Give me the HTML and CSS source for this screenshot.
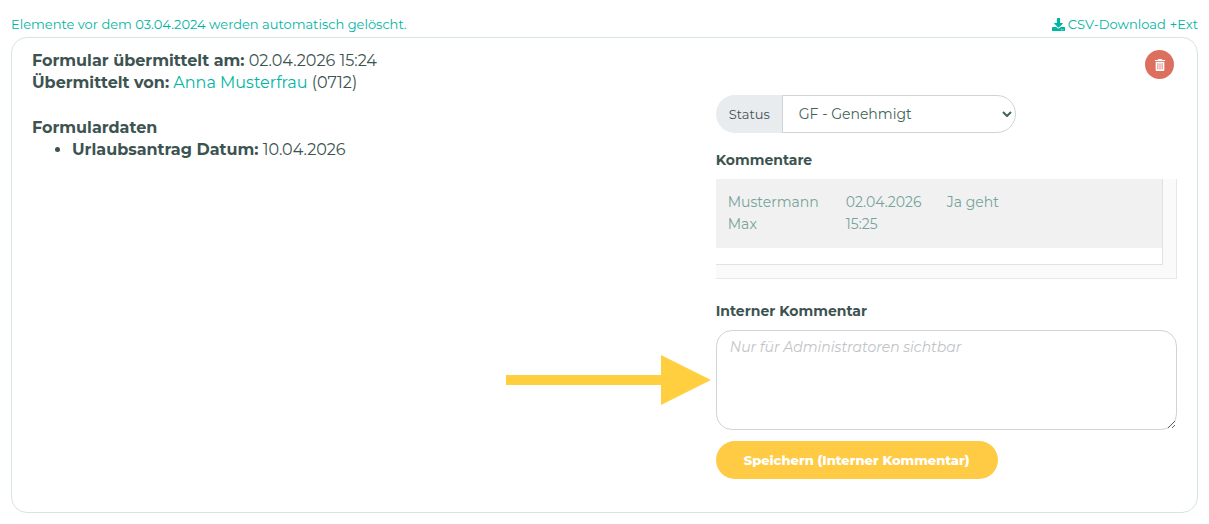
FILE: index.html
```html
<!DOCTYPE html>
<html lang="de">
<head>
<meta charset="utf-8">
<meta name="viewport" content="width=device-width, initial-scale=1">
<title>Formulardaten</title>
<link rel="stylesheet" href="styles.css">
</head>
<body class="page">
<header class="topbar">
  <span>Elemente vor dem 03.04.2024 werden automatisch gelöscht.</span>
  <nav class="downloads">
    <a class="link" href="#csv"><svg class="download-icon" viewBox="0 0 512 512" aria-hidden="true"><path fill="currentColor" d="M216 0h80c13.300 0 24 10.700 24 24v168h87.700c17.800 0 26.700 21.500 14.100 34.100L269.700 378.300c-7.500 7.500-19.800 7.500-27.300 0L90.100 226.100c-12.600-12.600-3.700-34.100 14.100-34.100H192V24c0-13.300 10.700-24 24-24zm296 376v112c0 13.300-10.700 24-24 24H24c-13.300 0-24-10.700-24-24V376c0-13.300 10.700-24 24-24h146.700l49 49c20.100 20.100 52.500 20.100 72.600 0l49-49H488c13.300 0 24 10.700 24 24zm-124 88a20 20 0 1 0-40 0 20 20 0 1 0 40 0zm64 0a20 20 0 1 0-40 0 20 20 0 1 0 40 0z"/></svg>CSV-Download</a>
    <a class="link" href="#ext">+Ext</a>
  </nav>
</header>
<main class="card">
  <section class="details">
    <p class="line"><strong>Formular übermittelt am:</strong> 02.04.2026 15:24</p>
    <p class="line"><strong>Übermittelt von:</strong> <a class="link" href="#user">Anna Musterfrau</a> (0712)</p>
    <h2 class="details-title">Formulardaten</h2>
    <ul class="fields">
      <li><strong>Urlaubsantrag Datum:</strong> 10.04.2026</li>
    </ul>
  </section>
  <section class="actions">
    <button class="delete" type="button" aria-label="Löschen"><svg class="trash-icon" viewBox="0 0 12 13" aria-hidden="true"><path fill="currentColor" fill-rule="evenodd" d="M4 0h4l.6 1H11.500v1.300H.5V1h2.900zM1.300 3h9.400v8.600c0 .8-.5 1.400-1.300 1.400H2.600c-.8 0-1.300-.6-1.300-1.400zM3.300 4.500v7h.9v-7zM5.550 4.500v7h.9v-7zM7.800 4.500v7h.9v-7z"/></svg></button>
    <div class="status">
      <label class="status-label" for="status">Status</label>
      <div class="status-field">
        <select class="status-select" id="status"><option>GF - Genehmigt</option></select>
        <svg class="chevron" viewBox="0 0 10 6" aria-hidden="true"><path d="M1 1l4 4 4-4" fill="none" stroke="currentColor" stroke-width="2"/></svg>
      </div>
    </div>
    <h3 class="heading">Kommentare</h3>
    <div class="comments">
      <div class="comments-inner">
        <table class="comment-table">
          <tr><td class="author">Mustermann Max</td><td class="date">02.04.2026 15:25</td><td>Ja geht</td></tr>
        </table>
      </div>
    </div>
    <label class="heading" for="internal">Interner Kommentar</label>
    <div class="note">
      <svg class="arrow" viewBox="0 0 205 50" aria-hidden="true"><path fill="currentColor" d="M0 20h155V0l50 25-50 25V30H0z"/></svg>
      <textarea class="note-input" id="internal" placeholder="Nur für Administratoren sichtbar"></textarea>
    </div>
    <button class="save" type="button">Speichern (Interner Kommentar)</button>
  </section>
</main>
</body>
</html>
```
FILE: styles.css
```css
* {
  box-sizing: border-box;
}

.page {
  margin: 0;
  padding: 14px 11px 11px;
  background: #fff;
  color: #3d5351;
  font: 16px/22px Montserrat, Inter, "Open Sans", sans-serif;
}

.link {
  color: #00b5a3;
  text-decoration: none;
}

.topbar {
  display: flex;
  justify-content: space-between;
  color: #00b5a3;
  font-size: 13px;
  line-height: 20px;
  margin-bottom: 3px;
}

.downloads {
  display: flex;
  gap: 4px;
}

.download-icon {
  width: 13px;
  height: 13px;
  margin-right: 3px;
  vertical-align: -2px;
}

.card {
  display: grid;
  grid-template-columns: 7fr 5fr;
  column-gap: 38px;
  padding: 12px 20px 33px;
  border: 1px solid #d8e4e1;
  border-radius: 16px;
}

.line {
  margin: 0;
}

.details-title {
  margin: 23px 0 0;
  font-size: 16px;
  font-weight: 700;
  line-height: 22px;
}

.fields {
  margin: 0;
  padding-left: 40px;
}

.actions {
  display: flex;
  flex-direction: column;
  align-items: flex-start;
}

.delete {
  display: flex;
  align-items: center;
  justify-content: center;
  align-self: flex-end;
  width: 29px;
  height: 29px;
  margin: 0 3px 16px 0;
  padding: 0;
  border: 0;
  border-radius: 50%;
  background: #dd6f5e;
  color: #fff;
}

.trash-icon {
  width: 12px;
  height: 12px;
}

.status {
  display: flex;
  width: 300px;
  max-width: 100%;
  height: 38px;
  margin-bottom: 16px;
}

.status-label {
  display: flex;
  align-items: center;
  padding: 0 12px 0 13px;
  border-radius: 19px 0 0 19px;
  background: #e8ecef;
  color: #495057;
  font-size: 13px;
}

.status-field {
  position: relative;
  flex: 1;
}

.status-select {
  width: 100%;
  height: 100%;
  padding: 0 28px 0 16px;
  border: 1px solid #ced4da;
  border-radius: 0 19px 19px 0;
  appearance: none;
  background: #fff;
  color: #426357;
  font: inherit;
  font-size: 14px;
}

.chevron {
  position: absolute;
  top: 16px;
  right: 4px;
  width: 10px;
  height: 6px;
  color: #426357;
  pointer-events: none;
}

.heading {
  margin: 0 0 8px;
  font-size: 14px;
  font-weight: 700;
  line-height: 22px;
}

.comments {
  width: 100%;
  margin-bottom: 21px;
  padding: 0 13px 13px 0;
  border: solid #e8e8e8;
  border-width: 0 1px 1px 0;
  background: #fafafa;
}

.comments-inner {
  padding-bottom: 16px;
  border: solid #e2e2e2;
  border-width: 0 1px 1px 0;
  background: #fff;
}

.comment-table {
  width: 100%;
  border-collapse: collapse;
  table-layout: fixed;
  background: #f1f1f1;
  color: #76a39a;
  font-size: 14px;
}

.comment-table td {
  padding: 12px 0 13px 12px;
  vertical-align: top;
}

.comment-table .author {
  width: 118px;
  padding-right: 12px;
}

.comment-table .date {
  width: 101px;
  padding-right: 10px;
}

.note {
  position: relative;
  width: 100%;
  margin-bottom: 11px;
}

.arrow {
  position: absolute;
  top: 25px;
  right: 100%;
  width: 205px;
  height: 50px;
  margin-right: 5px;
  color: #ffcf40;
}

.note-input {
  display: block;
  width: 100%;
  height: 100px;
  padding: 5px 13px;
  border: 1px solid #ced4da;
  border-radius: 16px;
  background: #fff;
  color: #3d5351;
  font: inherit;
  font-size: 14px;
}

.note-input::placeholder {
  color: #bfc4c7;
  font-style: italic;
}

.save {
  height: 38px;
  padding: 0 28px;
  border: 0;
  border-radius: 19px;
  background: #ffcb45;
  color: #fff;
  font: inherit;
  font-size: 13px;
  font-weight: 800;
}
```
